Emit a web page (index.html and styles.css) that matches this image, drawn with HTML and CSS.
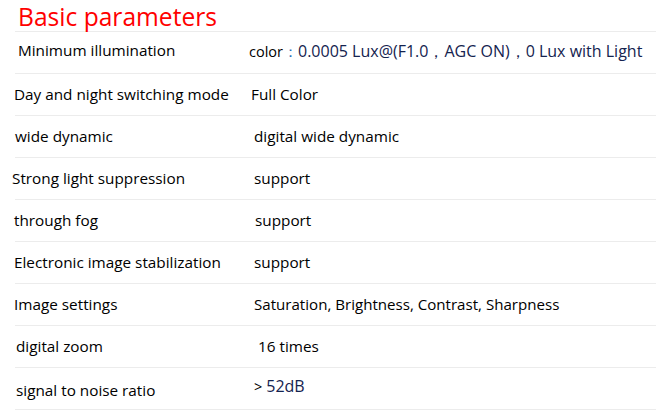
FILE: index.html
```html
<!DOCTYPE html>
<html>
<head>
<meta charset="utf-8">
<link rel="stylesheet" href="styles.css">
</head>
<body>
<div class="page">
  <h1 class="title">Basic parameters</h1>
  <div class="spec-list">
    <div class="row">
      <div class="label l-18 up2">Minimum illumination</div>
      <div class="value v-249"><span class="small">color</span><span class="colon">：</span><span class="navy">0.0005 Lux@(F1.0，AGC ON)，0 Lux with Light</span></div>
    </div>
    <div class="row">
      <div class="label l-14">Day and night switching mode</div>
      <div class="value v-251">Full Color</div>
    </div>
    <div class="row">
      <div class="label l-15">wide dynamic</div>
      <div class="value v-254">digital wide dynamic</div>
    </div>
    <div class="row">
      <div class="label l-12">Strong light suppression</div>
      <div class="value v-254">support</div>
    </div>
    <div class="row">
      <div class="label l-14">through fog</div>
      <div class="value v-255">support</div>
    </div>
    <div class="row">
      <div class="label l-14">Electronic image stabilization</div>
      <div class="value v-254">support</div>
    </div>
    <div class="row">
      <div class="label l-14">Image settings</div>
      <div class="value v-254 tight">Saturation, Brightness, Contrast, Sharpness</div>
    </div>
    <div class="row">
      <div class="label l-16">digital zoom</div>
      <div class="value v-258">16 times</div>
    </div>
    <div class="row">
      <div class="label l-16 down2">signal to noise ratio</div>
      <div class="value v-254 up2"><span class="small">&gt;</span> <span class="navy">52dB</span></div>
    </div>
  </div>
</div>
</body>
</html>
```

FILE: styles.css
```css
html, body {
  margin: 0;
  padding: 0;
  background: #ffffff;
}
.page {
  width: 656px;
  font-family: "Open Sans", "Noto Sans", sans-serif;
  color: #000000;
}
.title {
  margin: 0;
  height: 31px;
  padding-left: 18px;
  font-size: 24.6px;
  font-weight: 400;
  line-height: 33px;
  color: #ff0000;
  box-sizing: border-box;
}
.spec-list {
  margin-left: 15px;
  border-top: 1px solid #ececec;
}
.row {
  display: grid;
  grid-template-columns: 239px 1fr;
  height: 41px;
  box-sizing: content-box;
  align-items: center;
  border-bottom: 1px solid #ececec;
  font-size: 15.3px;
}
.label, .value {
  white-space: nowrap;
  position: relative;
  top: -1px;
}
.tight { font-size: 15.1px; }
.l-12 { margin-left: -3px; }
.l-14 { margin-left: -1px; }
.l-15 { margin-left: 0; }
.l-16 { margin-left: 1px; }
.l-18 { margin-left: 3px; }
.v-249 { margin-left: -5px; }
.v-251 { margin-left: -3px; }
.v-254 { margin-left: 0; }
.v-255 { margin-left: 1px; }
.v-258 { margin-left: 4px; }
.up2 { top: -3px; }
.down2 { top: 1px; }
.small {
  font-size: 14.5px;
  color: #000000;
}
.colon {
  color: #2a6fb8;
}
.navy {
  color: #14234f;
  font-size: 16px;
}
```
